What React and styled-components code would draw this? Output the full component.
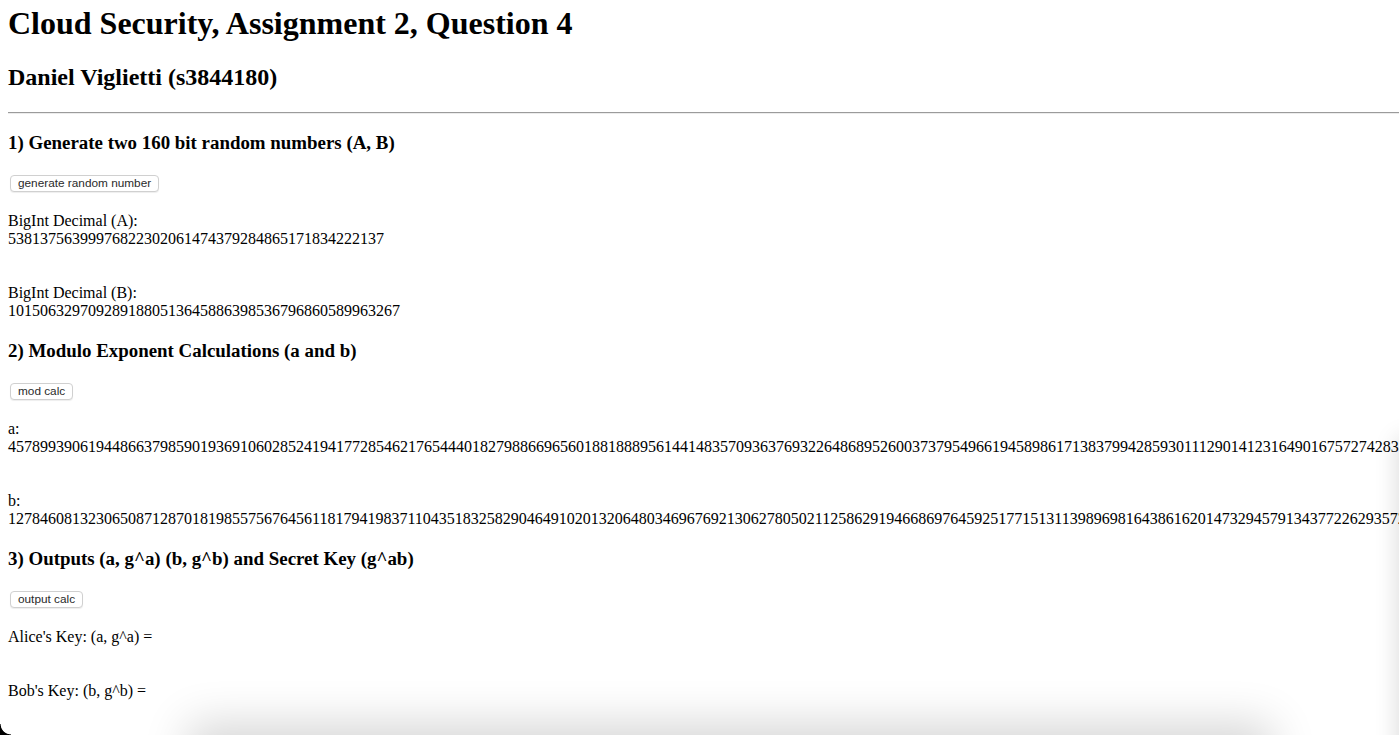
import React from "react";
import styled, { createGlobalStyle } from "styled-components";

const GlobalStyle = createGlobalStyle`
  html { overflow: hidden; }
  body {
    margin: 0;
    background: #ffffff;
    color: #000000;
    font-family: "Liberation Serif", "Times New Roman", serif;
    font-size: 16px;
  }
`;

const Page = styled.main`
  padding: 0 8px;
`;

const Title = styled.h1`
  margin: 5px 0 0;
  font-size: 32px;
  line-height: 37px;
  font-weight: 700;
`;

const Subtitle = styled.h2`
  margin: 21px 0 0;
  font-size: 24px;
  line-height: 28px;
  font-weight: 700;
`;

const Rule = styled.hr`
  margin: 21px -8px 0 0;
  height: 0;
  border: 0;
  border-top: 1px solid #9b9b9b;
  border-bottom: 1px solid #ececec;
`;

const Sections = styled.div`
  display: flex;
  flex-direction: column;
  gap: 20px;
  margin-top: 18px;
`;

const Section = styled.section`
  display: flex;
  flex-direction: column;
`;

const Heading = styled.h3`
  margin: 0;
  font-size: 18.9px;
  line-height: 22px;
  font-weight: 700;
`;

const ActionRow = styled.div`
  display: flex;
  margin-top: 21px;
  padding-left: 2px;
`;

const ActionButton = styled.button`
  height: 17px;
  padding: 0 7px;
  font-family: "Liberation Sans", Arial, sans-serif;
  font-size: 11.8px;
  line-height: 15px;
  color: #2a2a2a;
  background: #ffffff;
  border: 1px solid #d0d0d0;
  border-radius: 4px;
  box-shadow: 0 1px 1px rgba(0, 0, 0, 0.07);
  cursor: pointer;
`;

const Output = styled.div`
  margin-top: ${(p) => (p.$first ? 20 : 36)}px;
  line-height: 18px;
`;

const Label = styled.div`
  white-space: nowrap;
`;

const Value = styled.div`
  white-space: nowrap;
`;

const Decor = styled.div`
  position: fixed;
  inset: 0;
  pointer-events: none;
  overflow: hidden;
`;

const BottomShade = styled.div`
  position: absolute;
  left: 200px;
  width: 1060px;
  top: 735px;
  height: 40px;
  box-shadow: 0 0 45px 12px rgba(0, 0, 0, 0.16);
`;

const RightShade = styled.div`
  position: absolute;
  left: 1399px;
  top: 440px;
  width: 40px;
  height: 420px;
  box-shadow: 0 0 22px 3px rgba(0, 0, 0, 0.13);
`;

const Corner = styled.div`
  position: absolute;
  left: 0;
  bottom: 0;
  width: 11px;
  height: 11px;
  background: radial-gradient(circle at 100% 0, transparent 10px, #000 10.8px);
`;

const A_NUM = "53813756399976822302061474379284865171834222137";
const B_NUM = "1015063297092891880513645886398536796860589963267";
const SMALL_A =
  "457899390619448663798590193691060285241941772854621765444018279886696560188188895614414835709363769322648689526003737954966194589861713837994285930111290141231649016757274283150926";
const SMALL_B =
  "127846081323065087128701819855756764561181794198371104351832582904649102013206480346967692130627805021125862919466869764592517715131139896981643861620147329457913437722629357284610";

const sections = [
  {
    heading: "1) Generate two 160 bit random numbers (A, B)",
    button: "generate random number",
    outputs: [
      { label: "BigInt Decimal (A):", value: A_NUM },
      { label: "BigInt Decimal (B):", value: B_NUM },
    ],
  },
  {
    heading: "2) Modulo Exponent Calculations (a and b)",
    button: "mod calc",
    outputs: [
      { label: "a:", value: SMALL_A },
      { label: "b:", value: SMALL_B },
    ],
  },
  {
    heading: "3) Outputs (a, g^a) (b, g^b) and Secret Key (g^ab)",
    button: "output calc",
    outputs: [
      { label: "Alice's Key: (a, g^a) =", value: "" },
      { label: "Bob's Key: (b, g^b) =", value: "" },
    ],
  },
];

export default function App() {
  return (
    <>
      <GlobalStyle />
      <Page>
        <Title>Cloud Security, Assignment 2, Question 4</Title>
        <Subtitle>Daniel Viglietti (s3844180)</Subtitle>
        <Rule />
        <Sections>
          {sections.map((s) => (
            <Section key={s.heading}>
              <Heading>{s.heading}</Heading>
              <ActionRow>
                <ActionButton type="button">{s.button}</ActionButton>
              </ActionRow>
              {s.outputs.map((o, i) => (
                <Output key={o.label} $first={i === 0}>
                  <Label>{o.label}</Label>
                  {o.value ? <Value>{o.value}</Value> : null}
                </Output>
              ))}
            </Section>
          ))}
        </Sections>
      </Page>
      <Decor>
        <BottomShade />
        <RightShade />
        <Corner />
      </Decor>
    </>
  );
}
